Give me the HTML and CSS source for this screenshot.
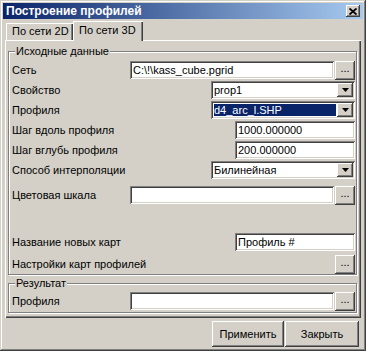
FILE: index.html
```html
<!DOCTYPE html>
<html lang="ru">
<head>
<meta charset="utf-8">
<title>Построение профилей</title>
<link rel="stylesheet" href="styles.css">
</head>
<body>
<div class="window">
  <div class="titlebar">
    <span class="title">Построение профилей</span>
    <span class="close"><svg width="8" height="7" viewBox="0 0 8 7"><path d="M0.5 0.5 L7.5 6.5 M7.5 0.5 L0.5 6.5" stroke="#000" stroke-width="1.8" fill="none"/></svg></span>
  </div>
  <div class="tabs">
    <div class="tab">По сети 2D</div>
    <div class="tab active">По сети 3D</div>
  </div>
  <div class="panel">
    <fieldset class="group main">
      <legend>Исходные данные</legend>
      <div class="row">
        <span class="label">Сеть</span>
        <div class="field wide"><div class="edit grow">C:\!\kass_cube.pgrid</div><div class="btn dots">...</div></div>
      </div>
      <div class="row">
        <span class="label">Свойство</span>
        <div class="combo"><div class="ctext">prop1</div><div class="drop"><svg width="7" height="4" viewBox="0 0 7 4"><path d="M0 0 H7 L3.5 4 Z" fill="#000"/></svg></div></div>
      </div>
      <div class="row">
        <span class="label">Профиля</span>
        <div class="combo"><div class="ctext sel">d4_arc_l.SHP</div><div class="drop"><svg width="7" height="4" viewBox="0 0 7 4"><path d="M0 0 H7 L3.5 4 Z" fill="#000"/></svg></div></div>
      </div>
      <div class="row">
        <span class="label">Шаг вдоль профиля</span>
        <div class="edit short">1000.000000</div>
      </div>
      <div class="row">
        <span class="label">Шаг вглубь профиля</span>
        <div class="edit short">200.000000</div>
      </div>
      <div class="row">
        <span class="label">Способ интерполяции</span>
        <div class="combo"><div class="ctext">Билинейная</div><div class="drop"><svg width="7" height="4" viewBox="0 0 7 4"><path d="M0 0 H7 L3.5 4 Z" fill="#000"/></svg></div></div>
      </div>
      <div class="row scale">
        <span class="label">Цветовая шкала</span>
        <div class="field wide"><div class="edit grow"></div><div class="btn dots">...</div></div>
      </div>
      <div class="row names">
        <span class="label">Название новых карт</span>
        <div class="edit short">Профиль #</div>
      </div>
      <div class="row settings">
        <span class="label">Настройки карт профилей</span>
        <div class="btn dots">...</div>
      </div>
    </fieldset>
    <fieldset class="group result">
      <legend>Результат</legend>
      <div class="row">
        <span class="label">Профиля</span>
        <div class="field wide"><div class="edit grow"></div><div class="btn dots">...</div></div>
      </div>
    </fieldset>
  </div>
  <div class="footer">
    <div class="btn push apply">Применить</div>
    <div class="btn push closebtn">Закрыть</div>
  </div>
</div>
</body>
</html>
```
FILE: styles.css
```css
* { box-sizing: border-box; }
body {
  margin: 0;
  font: 11px/13px "Liberation Sans", Arial, sans-serif;
  color: #000;
  background: #d4d0c8;
}
.window {
  width: 366px;
  height: 351px;
  background: #d4d0c8;
  padding: 3px;
  display: flex;
  flex-direction: column;
  box-shadow: inset -1px -1px #404040, inset 1px 1px #d4d0c8, inset -2px -2px #808080, inset 2px 2px #fff;
}
.titlebar {
  height: 16px;
  flex: none;
  background: linear-gradient(to right, #0a246a, #a6caf0);
  display: flex;
  align-items: center;
  justify-content: space-between;
  padding: 0 3px;
  color: #fff;
  font-weight: bold;
  font-size: 12px;
}
.close {
  width: 14px;
  height: 12px;
  background: #d4d0c8;
  display: flex;
  align-items: center;
  justify-content: center;
  box-shadow: inset -1px -1px #404040, inset 1px 1px #fff, inset -2px -2px #808080;
}
.close svg { display: block; }
.tabs {
  height: 19px;
  margin-top: 2px;
  flex: none;
  display: flex;
  align-items: flex-end;
  padding-left: 3px;
}
.tab {
  height: 17px;
  width: 67px;
  padding: 2px 0 0 6px;
  box-shadow: inset 1px 1px #fff, inset -1px 0 #404040, inset -2px 0 #808080;
}
.tab.active {
  position: relative;
  z-index: 1;
  height: 20px;
  width: 70px;
  margin-bottom: -1px;
  padding: 3px 0 0 6px;
  background: #d4d0c8;
}
.panel {
  height: 278px;
  flex: none;
  margin: 0 2px;
  padding: 5px 4px 0 3px;
  box-shadow: inset 1px 1px #fff, inset -1px -1px #404040, inset -2px -2px #808080;
}
.group {
  margin: 0;
  min-width: 0;
  border: 1px solid #808080;
  box-shadow: inset 1px 1px #fff, 1px 1px #fff;
  padding: 2px 1px 0 3px;
}
.group legend {
  padding: 0 1px;
  margin-left: 3px;
  line-height: 13px;
  background: #d4d0c8;
}
.group.result { margin-top: 2px; padding-top: 1px; padding-bottom: 1px; }
.row {
  height: 20px;
  display: flex;
  align-items: center;
  justify-content: space-between;
}
.row.scale { margin-top: 5px; }
.row.names { margin-top: 27px; }
.row.settings { margin-top: 2px; }
.field.wide {
  width: 225px;
  display: flex;
  gap: 1px;
}
.edit {
  height: 18px;
  background: #fff;
  padding: 3px 0 0 3px;
  white-space: nowrap;
  overflow: hidden;
  box-shadow: inset 1px 1px #808080, inset -1px -1px #fff, inset 2px 2px #404040, inset -2px -2px #d4d0c8;
}
.edit.grow { flex: 1; }
.edit.short { width: 120px; }
.btn {
  background: #d4d0c8;
  display: flex;
  align-items: center;
  justify-content: center;
  box-shadow: inset -1px -1px #404040, inset 1px 1px #fff, inset -2px -2px #808080;
}
.btn.dots {
  width: 20px;
  height: 19px;
  padding-bottom: 3px;
  font-size: 11px;
}
.combo {
  width: 144px;
  height: 18px;
  background: #fff;
  display: flex;
  align-items: stretch;
  padding: 2px;
  box-shadow: inset 1px 1px #808080, inset -1px -1px #fff, inset 2px 2px #404040, inset -2px -2px #d4d0c8;
}
.ctext {
  flex: 1;
  margin: 0 1px 0 0;
  padding: 1px 0 0 1px;
  white-space: nowrap;
}
.ctext.sel {
  background: #0a246a;
  color: #fff;
  margin: 1px 1px 1px 1px;
  padding: 0 0 0 0;
}
.drop {
  width: 16px;
  background: #d4d0c8;
  display: flex;
  align-items: center;
  justify-content: center;
  box-shadow: inset -1px -1px #404040, inset 1px 1px #fff, inset -2px -2px #808080;
}
.drop svg { display: block; }
.footer {
  height: 30px;
  flex: none;
  display: flex;
  justify-content: flex-end;
  align-items: flex-start;
  gap: 1px;
  padding: 3px 4px 0 0;
}
.btn.push { height: 26px; }
.btn.apply { width: 72px; }
.btn.closebtn { width: 74px; }
```
